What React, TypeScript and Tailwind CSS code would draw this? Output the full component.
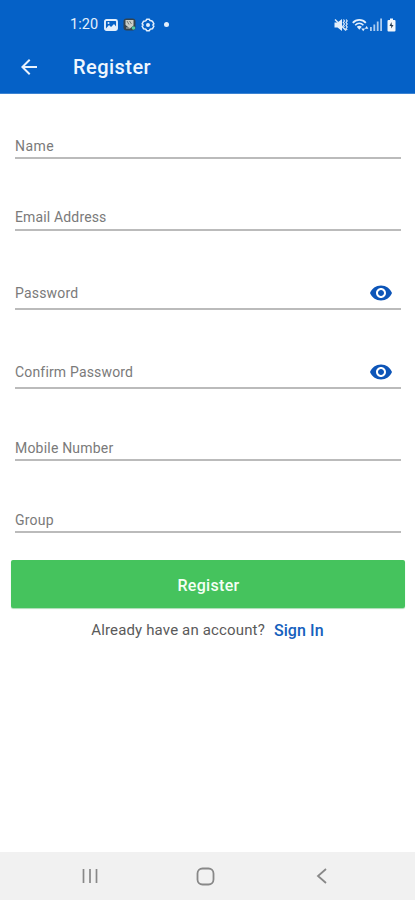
import { MdArrowBack, MdVisibility } from "react-icons/md"

type Field = {
    label: string
    className: string
    secret?: boolean
}

// form fields, the className holds the height of the row
const fields: Field[] = [
    { label: "Name", className: "h-[65px] pb-[3px] tracking-[0.45px]" },
    { label: "Email Address", className: "h-[72px] pb-1 tracking-[0.15px]" },
    { label: "Password", className: "h-[79px] pb-[7px] tracking-[0.2px]", secret: true },
    { label: "Confirm Password", className: "h-[79px] pb-[7px] tracking-[0.17px]", secret: true },
    { label: "Mobile Number", className: "h-[72px] pb-[3px] tracking-[0.2px]" },
    { label: "Group", className: "h-[72px] pb-[3px] tracking-[0.2px]" },
]

const StatusBar = () => {
    return (
        <div className="flex h-12 items-center justify-between pl-[70px] pr-[19px] pt-px text-[#e3effc]">
            <div className="flex items-center">
                <span className="w-[34px] whitespace-nowrap pt-px text-[14.5px] leading-5 tracking-[0.1px]">1:20</span>
                {/* gallery */}
                <svg width="14" height="12" viewBox="0 0 14 12" fill="none">
                    <rect x="1" y="1" width="12" height="10" rx="1.5" stroke="currentColor" strokeWidth="1.9" />
                    <path d="M2 9.5L5 6L7 8L10 5L12.5 8V10H2Z" fill="currentColor" />
                    <circle cx="4.5" cy="4" r="1" fill="currentColor" />
                </svg>
                {/* app notification */}
                <svg className="ml-[5px]" width="13" height="13" viewBox="0 0 13 13" fill="none">
                    <rect x="0.5" y="0.5" width="12" height="12" rx="3" fill="#34434d" />
                    <path d="M2.5 2H10.5V7.5L7 10.5L2.5 7Z" fill="#c9cfc9" />
                    <path d="M4 3L6 6.5M6.5 3L8.5 6" stroke="#6b7370" strokeWidth="0.9" />
                    <path d="M3 10H7" stroke="#b6beb9" strokeWidth="1" />
                    <circle cx="10.5" cy="10" r="1.8" fill="#54c9a4" />
                </svg>
                {/* settings */}
                <svg className="ml-[5px]" width="14" height="14" viewBox="0 0 14 14" fill="none" stroke="currentColor">
                    <path d="M5.6 1.2H8.4L8.9 2.6L10.3 2.8L11.4 3.2L12.9 5.8L11.9 7L12.9 8.2L11.4 10.8L10 11L8.9 11.4L8.4 12.8H5.6L5.1 11.4L4 11L2.6 10.8L1.1 8.2L2.1 7L1.1 5.8L2.6 3.2L4 3L5.1 2.6Z" strokeWidth="1.5" strokeLinejoin="round" />
                    <circle cx="7" cy="7" r="2" fill="currentColor" stroke="none" />
                </svg>
                <span className="ml-[9px] size-[5px] rounded-full bg-[#e3effc]" />
            </div>

            <div className="flex items-center">
                {/* muted */}
                <svg width="14" height="14" viewBox="0 0 14 14" fill="none">
                    <path d="M0.5 4.5H3.5L8 1V13L3.5 9.5H0.5Z" fill="currentColor" />
                    <path d="M1 1.5L12 12.5" stroke="currentColor" strokeWidth="1.4" />
                    <path d="M9.5 1.5L10.5 3L9.3 4.5L10.5 6L9.3 7.5L10.5 9M12.2 1.5L13.2 3L12 4.5L13.2 6L12 7.5L13.2 9L12 10.5L13.2 12" stroke="currentColor" strokeWidth="1.2" />
                </svg>
                {/* wifi */}
                <svg className="ml-[4px]" width="17" height="14" viewBox="0 0 17 14" fill="none" stroke="currentColor">
                    <path d="M0.8 4.8C4.3 0.8 10.3 0.8 13.8 4.8" strokeWidth="1.8" />
                    <path d="M3.2 7.2C5.5 4.6 9.1 4.6 11.4 7.2" strokeWidth="1.6" />
                    <path d="M4.8 8.8C6.4 7.4 8.2 7.4 9.8 8.8L7.3 11.7Z" fill="currentColor" stroke="none" />
                    <path d="M9.3 10.5H13.1L11.2 13.3ZM12.8 10.8H16.4L14.6 8Z" fill="currentColor" stroke="none" />
                </svg>
                {/* signal */}
                <svg className="ml-px" width="12" height="13" viewBox="0 0 12 13" fill="currentColor">
                    <rect x="0" y="9" width="1.8" height="4" opacity=".75" />
                    <rect x="3.4" y="6.5" width="1.8" height="6.5" opacity=".75" />
                    <rect x="6.8" y="3.5" width="1.8" height="9.5" opacity=".75" />
                    <rect x="10.2" y="0.5" width="1.8" height="12.5" opacity=".75" />
                </svg>
                {/* battery */}
                <svg className="ml-[5px]" width="9" height="14" viewBox="0 0 9 14" fill="none">
                    <path d="M3 0.5H6V2H7.5Q8.5 2 8.5 3V12.5Q8.5 13.5 7.5 13.5H1.5Q0.5 13.5 0.5 12.5V3Q0.5 2 1.5 2H3Z" fill="#f2f7fb" />
                    <path d="M4.5 4L2.5 8H4.2V10.5L6.5 7H4.8Z" fill="#263c50" />
                </svg>
            </div>
        </div>
    )
}

const App = () => {
    return (
        <div className="flex h-[900px] w-[415px] flex-col overflow-hidden bg-white font-['Roboto',sans-serif]">

            {/* header */}
            <header className="h-[94px] shrink-0 border-b border-[#3c83d2] bg-[#0561c7]">
                <StatusBar />
                <div className="flex h-[37px] items-center pl-[17px]">
                    <button type="button" title="back" className="text-[#e9f2fd]">
                        <MdArrowBack size={24} />
                    </button>
                    <h1 className="ml-8 pt-px text-xl font-medium leading-6 tracking-[0.45px] text-[#eff6fe]">Register</h1>
                </div>
            </header>

            {/* form */}
            <main className="flex grow flex-col">
                <div className="pl-[15px] pr-[14px]">
                    {fields.map((field) => (
                        <label
                            key={field.label}
                            className={`flex items-end justify-between border-b-2 border-[#bbbbbb] text-sm leading-4 text-[#7a7a7a] ${field.className}`}
                        >
                            <span>{field.label}</span>
                            {/* show password */}
                            {field.secret && <MdVisibility size={24} className="-mb-1 mr-2 text-[#0d55b8]" />}
                        </label>
                    ))}
                </div>

                {/* submit */}
                <button
                    type="button"
                    className="ml-[11px] mt-[27px] h-12 w-[394px] rounded-xs bg-[#45c35d] pl-px pt-[3px] text-base font-medium tracking-[0.3px] text-[#f4fff5] shadow-[0_1px_1px_#a9dcb3]"
                >
                    Register
                </button>

                <p className="mt-[11px] flex items-center justify-center gap-[9px] text-[15px] leading-5 text-[#5a5a5a]">
                    <span className="tracking-[0.15px]">Already have an account?</span>
                    <a href="#" className="pt-0.5 text-base font-medium leading-5 tracking-[0.1px] text-[#1560bd]">Sign In</a>
                </p>
            </main>

            {/* android navigation */}
            <nav className="flex h-12 shrink-0 items-center bg-[#f1f1f1] text-[#888]">
                <svg className="ml-[82px]" width="16" height="16" viewBox="0 0 16 16" stroke="currentColor" strokeWidth="1.7">
                    <path d="M1.5 1V15M8 1V15M14.5 1V15" />
                </svg>
                <svg className="ml-[98px]" width="19" height="19" viewBox="0 0 19 19" fill="none" stroke="currentColor" strokeWidth="1.8">
                    <rect x="1.5" y="1.5" width="16" height="16" rx="5" />
                </svg>
                <svg className="ml-[101px]" width="12" height="18" viewBox="0 0 12 18" fill="none" stroke="currentColor" strokeWidth="1.8">
                    <path d="M10 2L2 9L10 16" />
                </svg>
            </nav>
        </div>
    )
}

export default App
